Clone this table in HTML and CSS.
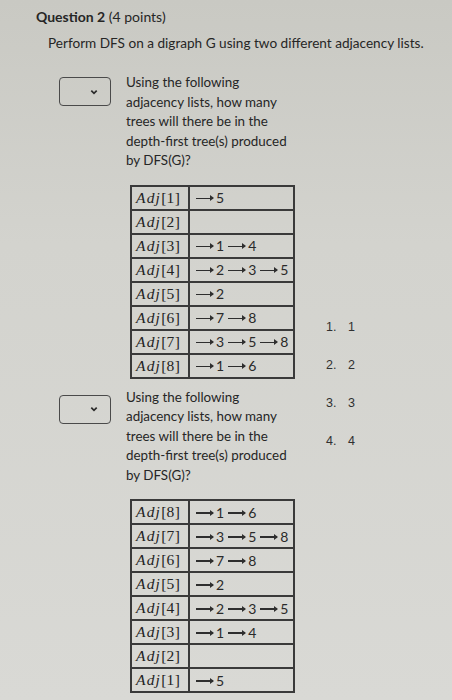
FILE: index.html
```html
<!DOCTYPE html>
<html>
<head>
<meta charset="utf-8">
<link rel="stylesheet" href="styles.css">
</head>
<body>
<div class="page">
  <h2 class="title"><b>Question 2</b> (4 points)</h2>
  <p class="prompt">Perform DFS on a digraph G using two different adjacency lists.</p>
  <div class="body">
    <div class="questions">
      <div class="q">
        <div class="select"><svg class="chev" width="8" height="6" viewBox="0 0 8 6"><path d="M1.3 1.6 L4 4.3 L6.7 1.6" fill="none" stroke="#2b2b2b" stroke-width="1.7"/></svg></div>
        <div class="qcontent">
          <p class="qtext">Using the following adjacency lists, how many trees will there be in the depth-first tree(s) produced by DFS(G)?</p>
          <table class="adj">
            <tr><td class="k"><i>Adj</i>[1]</td><td class="v"><span class="ar"></span>5</td></tr>
            <tr><td class="k"><i>Adj</i>[2]</td><td class="v"></td></tr>
            <tr><td class="k"><i>Adj</i>[3]</td><td class="v"><span class="ar"></span>1<span class="ar"></span>4</td></tr>
            <tr><td class="k"><i>Adj</i>[4]</td><td class="v"><span class="ar"></span>2<span class="ar"></span>3<span class="ar"></span>5</td></tr>
            <tr><td class="k"><i>Adj</i>[5]</td><td class="v"><span class="ar"></span>2</td></tr>
            <tr><td class="k"><i>Adj</i>[6]</td><td class="v"><span class="ar"></span>7<span class="ar"></span>8</td></tr>
            <tr><td class="k"><i>Adj</i>[7]</td><td class="v"><span class="ar"></span>3<span class="ar"></span>5<span class="ar"></span>8</td></tr>
            <tr><td class="k"><i>Adj</i>[8]</td><td class="v"><span class="ar"></span>1<span class="ar"></span>6</td></tr>
          </table>
        </div>
      </div>
      <div class="q q2">
        <div class="select"><svg class="chev" width="8" height="6" viewBox="0 0 8 6"><path d="M1.3 1.6 L4 4.3 L6.7 1.6" fill="none" stroke="#2b2b2b" stroke-width="1.7"/></svg></div>
        <div class="qcontent">
          <p class="qtext">Using the following adjacency lists, how many trees will there be in the depth-first tree(s) produced by DFS(G)?</p>
          <table class="adj">
            <tr><td class="k"><i>Adj</i>[8]</td><td class="v"><span class="ar"></span>1<span class="ar"></span>6</td></tr>
            <tr><td class="k"><i>Adj</i>[7]</td><td class="v"><span class="ar"></span>3<span class="ar"></span>5<span class="ar"></span>8</td></tr>
            <tr><td class="k"><i>Adj</i>[6]</td><td class="v"><span class="ar"></span>7<span class="ar"></span>8</td></tr>
            <tr><td class="k"><i>Adj</i>[5]</td><td class="v"><span class="ar"></span>2</td></tr>
            <tr><td class="k"><i>Adj</i>[4]</td><td class="v"><span class="ar"></span>2<span class="ar"></span>3<span class="ar"></span>5</td></tr>
            <tr><td class="k"><i>Adj</i>[3]</td><td class="v"><span class="ar"></span>1<span class="ar"></span>4</td></tr>
            <tr><td class="k"><i>Adj</i>[2]</td><td class="v"></td></tr>
            <tr><td class="k"><i>Adj</i>[1]</td><td class="v"><span class="ar"></span>5</td></tr>
          </table>
        </div>
      </div>
    </div>
    <ol class="answers">
      <li>1</li>
      <li>2</li>
      <li>3</li>
      <li>4</li>
    </ol>
  </div>
</div>
</body>
</html>
```
FILE: styles.css
```css
html, body {
  margin: 0;
  padding: 0;
}
body {
  width: 452px;
  height: 700px;
  overflow: hidden;
  background: linear-gradient(to bottom, #c9c9c3 0%, #d3d3ce 35%, #d9d9d5 100%);
  color: #262626;
  font-family: Lato, "Open Sans", sans-serif;
}
.page {
  padding: 8px 0 0 36px;
}
.title {
  margin: 0;
  font-size: 14px;
  line-height: 18px;
  font-weight: normal;
}
.title b {
  font-weight: bold;
}
.prompt {
  margin: 8px 0 0 12px;
  font-size: 13.6px;
  line-height: 18px;
}
.body {
  display: flex;
  margin-top: 21px;
}
.questions {
  display: flex;
  flex-direction: column;
  margin-left: 23px;
  width: 245px;
}
.q {
  display: flex;
  gap: 15px;
}
.q2 {
  margin-top: 9px;
}
.select {
  flex: none;
  width: 52px;
  height: 29px;
  margin-top: 4px;
  border: 1.5px solid #4a4a4a;
  border-radius: 4px;
  display: flex;
  align-items: center;
  justify-content: flex-end;
  padding-right: 12px;
  box-sizing: border-box;
}
.q2 .select {
  margin-top: 7px;
}
.chev {
  display: block;
}
.qcontent {
  flex: 1;
}
.qtext {
  margin: 0;
  width: 170px;
  font-size: 13.4px;
  line-height: 19.5px;
}
.adj {
  margin: 14px 0 0 4px;
  border-collapse: collapse;
  width: 165px;
  border: 2px solid #353535;
}
.adj td {
  border: 2px solid #3a3a3a;
  height: 24px;
  padding: 0;
  box-sizing: border-box;
}
.adj td.k {
  width: 58px;
  padding-left: 4px;
  font-family: "Liberation Serif", "DejaVu Serif", serif;
  font-size: 15.5px;
  letter-spacing: 0.3px;
  color: #232323;
}
.adj td.k i {
  letter-spacing: 1.2px;
}
.adj td.v {
  padding-left: 6px;
  font-size: 14px;
  color: #2a2a2a;
  white-space: nowrap;
}
.ar {
  display: inline-block;
  position: relative;
  width: 17px;
  height: 1.2px;
  background: #2e2e2e;
  vertical-align: 4px;
  margin: 0 3px 0 4px;
}
.ar:first-child {
  margin-left: 0;
}
.ar::after {
  content: "";
  position: absolute;
  right: -1px;
  top: -2.6px;
  border-left: 4.5px solid #2e2e2e;
  border-top: 3.2px solid transparent;
  border-bottom: 3.2px solid transparent;
}
.answers {
  list-style: none;
  margin: 0;
  padding: 235px 0 0 22px;
  font-family: "Liberation Sans", Arial, sans-serif;
  font-size: 12.5px;
  line-height: 38px;
  color: #303030;
  counter-reset: ans;
}
.answers li {
  counter-increment: ans;
}
.answers li::before {
  content: counter(ans) ".";
  display: inline-block;
  width: 22px;
}
```
